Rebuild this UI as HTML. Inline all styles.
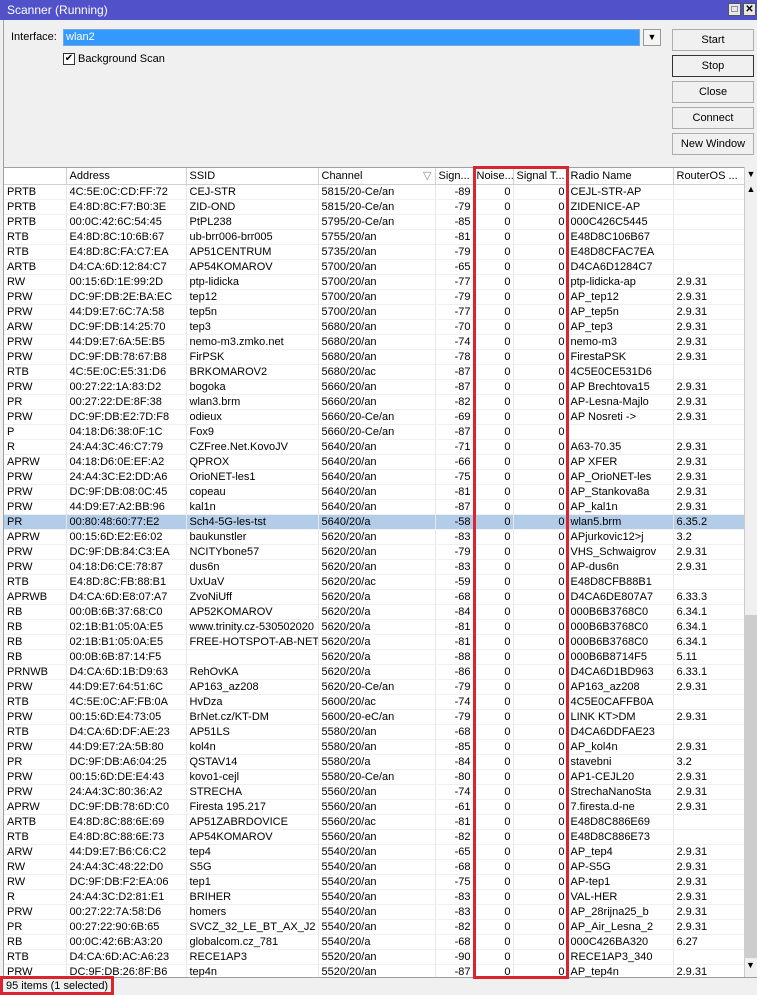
<!DOCTYPE html>
<html><head><meta charset="utf-8"><style>
*{margin:0;padding:0;box-sizing:border-box}
body{width:757px;height:995px;overflow:hidden;background:#f0f0f0;font-family:"Liberation Sans",sans-serif;font-size:11px;color:#000;position:relative}
.title{position:absolute;left:0;top:0;width:757px;height:20px;background:#5151c9;color:#fff;font-size:12px;line-height:20px;padding-left:7px}
.tb{position:absolute;top:3px;width:13px;height:13px;background:#e8e8e8;border:1px solid #555;font-size:10px;line-height:11px;text-align:center;color:#000}
.lbl{position:absolute;left:11px;top:31px;font-size:11px}
.inp{position:absolute;left:63px;top:29px;width:577px;height:17px;background:#3399ff;border:1px solid #7aa7d6;color:#fff;padding-left:2px;line-height:15px}
.dd{position:absolute;left:643px;top:29px;width:18px;height:17px;background:#f5f5f5;border:1px solid #999;font-size:9px;text-align:center;line-height:15px}
.cb{position:absolute;left:63px;top:53px;width:12px;height:12px;border:1px solid #333;background:#fff;font-size:10px;line-height:10px;text-align:center}
.cbl{position:absolute;left:78px;top:53px}
.btn{position:absolute;left:672px;width:82px;height:22px;background:#f0f0f0;border:1px solid #adadad;text-align:center;line-height:20px;font-size:11px}
.leftb{position:absolute;left:3px;top:20px;width:1px;height:957px;background:#a0a0a0}
.grid{position:absolute;left:4px;top:167px;width:740px;height:810px;background:#fff;overflow:hidden;border-top:1px solid #a0a0a0}
table{border-collapse:collapse;table-layout:fixed;width:740px}
td,th{height:15px;line-height:14px;white-space:nowrap;overflow:hidden;border-right:1px solid #e8e8e8;border-bottom:1px solid #f0f0f0;padding:0 3px;font-weight:normal;text-align:left}
th{height:16px;background:#fff;border-right:1px solid #d0d0d0;border-bottom:1px solid #d0d0d0}
td.n{text-align:right;padding-right:2px}
tr.sel td{background:#b3cde9}
.sb{position:absolute;left:744px;top:167px;width:13px;height:810px;background:#f0f0f0;border-left:1px solid #ccc}
.thumb{position:absolute;left:744px;top:615px;width:13px;height:343px;background:#cdcdcd}
.status{position:absolute;left:0;top:977px;width:757px;height:18px;background:#f0f0f0;border-top:1px solid #a0a0a0}
.st{position:absolute;left:6px;top:980px;font-size:11px}
.red{position:absolute;border:3px solid #d92530}
</style></head><body>
<div class="title">Scanner (Running)</div>
<div class="tb" style="left:728px">&#9633;</div>
<div class="tb" style="left:743px;font-weight:bold">✕</div>
<div class="lbl">Interface:</div>
<div class="inp">wlan2</div>
<div class="dd">▼</div>
<div class="cb">✔</div><div class="cbl">Background Scan</div>
<div class="btn" style="top:29px">Start</div>
<div class="btn" style="top:55px;border:1px solid #333">Stop</div>
<div class="btn" style="top:81px">Close</div>
<div class="btn" style="top:107px">Connect</div>
<div class="btn" style="top:133px">New Window</div>
<div class="leftb"></div>
<div class="grid"><table>
<colgroup><col style="width:62px"><col style="width:120px"><col style="width:132px"><col style="width:117px"><col style="width:38px"><col style="width:40px"><col style="width:54px"><col style="width:106px"><col style="width:71px"></colgroup>
<tr><th></th><th>Address</th><th>SSID</th><th>Channel <span style="float:right;color:#888">▽</span></th><th>Sign...</th><th>Noise...</th><th>Signal T...</th><th>Radio Name</th><th>RouterOS ...</th></tr>
<tr><td>PRTB</td><td>4C:5E:0C:CD:FF:72</td><td>CEJ-STR</td><td>5815/20-Ce/an</td><td class="n">-89</td><td class="n">0</td><td class="n">0</td><td>CEJL-STR-AP</td><td></td></tr>
<tr><td>PRTB</td><td>E4:8D:8C:F7:B0:3E</td><td>ZID-OND</td><td>5815/20-Ce/an</td><td class="n">-79</td><td class="n">0</td><td class="n">0</td><td>ZIDENICE-AP</td><td></td></tr>
<tr><td>PRTB</td><td>00:0C:42:6C:54:45</td><td>PtPL238</td><td>5795/20-Ce/an</td><td class="n">-85</td><td class="n">0</td><td class="n">0</td><td>000C426C5445</td><td></td></tr>
<tr><td>RTB</td><td>E4:8D:8C:10:6B:67</td><td>ub-brr006-brr005</td><td>5755/20/an</td><td class="n">-81</td><td class="n">0</td><td class="n">0</td><td>E48D8C106B67</td><td></td></tr>
<tr><td>RTB</td><td>E4:8D:8C:FA:C7:EA</td><td>AP51CENTRUM</td><td>5735/20/an</td><td class="n">-79</td><td class="n">0</td><td class="n">0</td><td>E48D8CFAC7EA</td><td></td></tr>
<tr><td>ARTB</td><td>D4:CA:6D:12:84:C7</td><td>AP54KOMAROV</td><td>5700/20/an</td><td class="n">-65</td><td class="n">0</td><td class="n">0</td><td>D4CA6D1284C7</td><td></td></tr>
<tr><td>RW</td><td>00:15:6D:1E:99:2D</td><td>ptp-lidicka</td><td>5700/20/an</td><td class="n">-77</td><td class="n">0</td><td class="n">0</td><td>ptp-lidicka-ap</td><td>2.9.31</td></tr>
<tr><td>PRW</td><td>DC:9F:DB:2E:BA:EC</td><td>tep12</td><td>5700/20/an</td><td class="n">-79</td><td class="n">0</td><td class="n">0</td><td>AP_tep12</td><td>2.9.31</td></tr>
<tr><td>PRW</td><td>44:D9:E7:6C:7A:58</td><td>tep5n</td><td>5700/20/an</td><td class="n">-77</td><td class="n">0</td><td class="n">0</td><td>AP_tep5n</td><td>2.9.31</td></tr>
<tr><td>ARW</td><td>DC:9F:DB:14:25:70</td><td>tep3</td><td>5680/20/an</td><td class="n">-70</td><td class="n">0</td><td class="n">0</td><td>AP_tep3</td><td>2.9.31</td></tr>
<tr><td>PRW</td><td>44:D9:E7:6A:5E:B5</td><td>nemo-m3.zmko.net</td><td>5680/20/an</td><td class="n">-74</td><td class="n">0</td><td class="n">0</td><td>nemo-m3</td><td>2.9.31</td></tr>
<tr><td>PRW</td><td>DC:9F:DB:78:67:B8</td><td>FirPSK</td><td>5680/20/an</td><td class="n">-78</td><td class="n">0</td><td class="n">0</td><td>FirestaPSK</td><td>2.9.31</td></tr>
<tr><td>RTB</td><td>4C:5E:0C:E5:31:D6</td><td>BRKOMAROV2</td><td>5680/20/ac</td><td class="n">-87</td><td class="n">0</td><td class="n">0</td><td>4C5E0CE531D6</td><td></td></tr>
<tr><td>PRW</td><td>00:27:22:1A:83:D2</td><td>bogoka</td><td>5660/20/an</td><td class="n">-87</td><td class="n">0</td><td class="n">0</td><td>AP Brechtova15</td><td>2.9.31</td></tr>
<tr><td>PR</td><td>00:27:22:DE:8F:38</td><td>wlan3.brm</td><td>5660/20/an</td><td class="n">-82</td><td class="n">0</td><td class="n">0</td><td>AP-Lesna-Majlo</td><td>2.9.31</td></tr>
<tr><td>PRW</td><td>DC:9F:DB:E2:7D:F8</td><td>odieux</td><td>5660/20-Ce/an</td><td class="n">-69</td><td class="n">0</td><td class="n">0</td><td>AP Nosreti -&gt;</td><td>2.9.31</td></tr>
<tr><td>P</td><td>04:18:D6:38:0F:1C</td><td>Fox9</td><td>5660/20-Ce/an</td><td class="n">-87</td><td class="n">0</td><td class="n">0</td><td></td><td></td></tr>
<tr><td>R</td><td>24:A4:3C:46:C7:79</td><td>CZFree.Net.KovoJV</td><td>5640/20/an</td><td class="n">-71</td><td class="n">0</td><td class="n">0</td><td>A63-70.35</td><td>2.9.31</td></tr>
<tr><td>APRW</td><td>04:18:D6:0E:EF:A2</td><td>QPROX</td><td>5640/20/an</td><td class="n">-66</td><td class="n">0</td><td class="n">0</td><td>AP XFER</td><td>2.9.31</td></tr>
<tr><td>PRW</td><td>24:A4:3C:E2:DD:A6</td><td>OrioNET-les1</td><td>5640/20/an</td><td class="n">-75</td><td class="n">0</td><td class="n">0</td><td>AP_OrioNET-les</td><td>2.9.31</td></tr>
<tr><td>PRW</td><td>DC:9F:DB:08:0C:45</td><td>copeau</td><td>5640/20/an</td><td class="n">-81</td><td class="n">0</td><td class="n">0</td><td>AP_Stankova8a</td><td>2.9.31</td></tr>
<tr><td>PRW</td><td>44:D9:E7:A2:BB:96</td><td>kal1n</td><td>5640/20/an</td><td class="n">-87</td><td class="n">0</td><td class="n">0</td><td>AP_kal1n</td><td>2.9.31</td></tr>
<tr class="sel"><td>PR</td><td>00:80:48:60:77:E2</td><td>Sch4-5G-les-tst</td><td>5640/20/a</td><td class="n">-58</td><td class="n">0</td><td class="n">0</td><td>wlan5.brm</td><td>6.35.2</td></tr>
<tr><td>APRW</td><td>00:15:6D:E2:E6:02</td><td>baukunstler</td><td>5620/20/an</td><td class="n">-83</td><td class="n">0</td><td class="n">0</td><td>APjurkovic12&gt;j</td><td>3.2</td></tr>
<tr><td>PRW</td><td>DC:9F:DB:84:C3:EA</td><td>NCITYbone57</td><td>5620/20/an</td><td class="n">-79</td><td class="n">0</td><td class="n">0</td><td>VHS_Schwaigrov</td><td>2.9.31</td></tr>
<tr><td>PRW</td><td>04:18:D6:CE:78:87</td><td>dus6n</td><td>5620/20/an</td><td class="n">-83</td><td class="n">0</td><td class="n">0</td><td>AP-dus6n</td><td>2.9.31</td></tr>
<tr><td>RTB</td><td>E4:8D:8C:FB:88:B1</td><td>UxUaV</td><td>5620/20/ac</td><td class="n">-59</td><td class="n">0</td><td class="n">0</td><td>E48D8CFB88B1</td><td></td></tr>
<tr><td>APRWB</td><td>D4:CA:6D:E8:07:A7</td><td>ZvoNiUff</td><td>5620/20/a</td><td class="n">-68</td><td class="n">0</td><td class="n">0</td><td>D4CA6DE807A7</td><td>6.33.3</td></tr>
<tr><td>RB</td><td>00:0B:6B:37:68:C0</td><td>AP52KOMAROV</td><td>5620/20/a</td><td class="n">-84</td><td class="n">0</td><td class="n">0</td><td>000B6B3768C0</td><td>6.34.1</td></tr>
<tr><td>RB</td><td>02:1B:B1:05:0A:E5</td><td>www.trinity.cz-530502020</td><td>5620/20/a</td><td class="n">-81</td><td class="n">0</td><td class="n">0</td><td>000B6B3768C0</td><td>6.34.1</td></tr>
<tr><td>RB</td><td>02:1B:B1:05:0A:E5</td><td>FREE-HOTSPOT-AB-NET</td><td>5620/20/a</td><td class="n">-81</td><td class="n">0</td><td class="n">0</td><td>000B6B3768C0</td><td>6.34.1</td></tr>
<tr><td>RB</td><td>00:0B:6B:87:14:F5</td><td></td><td>5620/20/a</td><td class="n">-88</td><td class="n">0</td><td class="n">0</td><td>000B6B8714F5</td><td>5.11</td></tr>
<tr><td>PRNWB</td><td>D4:CA:6D:1B:D9:63</td><td>RehOvKA</td><td>5620/20/a</td><td class="n">-86</td><td class="n">0</td><td class="n">0</td><td>D4CA6D1BD963</td><td>6.33.1</td></tr>
<tr><td>PRW</td><td>44:D9:E7:64:51:6C</td><td>AP163_az208</td><td>5620/20-Ce/an</td><td class="n">-79</td><td class="n">0</td><td class="n">0</td><td>AP163_az208</td><td>2.9.31</td></tr>
<tr><td>RTB</td><td>4C:5E:0C:AF:FB:0A</td><td>HvDza</td><td>5600/20/ac</td><td class="n">-74</td><td class="n">0</td><td class="n">0</td><td>4C5E0CAFFB0A</td><td></td></tr>
<tr><td>PRW</td><td>00:15:6D:E4:73:05</td><td>BrNet.cz/KT-DM</td><td>5600/20-eC/an</td><td class="n">-79</td><td class="n">0</td><td class="n">0</td><td>LINK KT&gt;DM</td><td>2.9.31</td></tr>
<tr><td>RTB</td><td>D4:CA:6D:DF:AE:23</td><td>AP51LS</td><td>5580/20/an</td><td class="n">-68</td><td class="n">0</td><td class="n">0</td><td>D4CA6DDFAE23</td><td></td></tr>
<tr><td>PRW</td><td>44:D9:E7:2A:5B:80</td><td>kol4n</td><td>5580/20/an</td><td class="n">-85</td><td class="n">0</td><td class="n">0</td><td>AP_kol4n</td><td>2.9.31</td></tr>
<tr><td>PR</td><td>DC:9F:DB:A6:04:25</td><td>QSTAV14</td><td>5580/20/a</td><td class="n">-84</td><td class="n">0</td><td class="n">0</td><td>stavebni</td><td>3.2</td></tr>
<tr><td>PRW</td><td>00:15:6D:DE:E4:43</td><td>kovo1-cejl</td><td>5580/20-Ce/an</td><td class="n">-80</td><td class="n">0</td><td class="n">0</td><td>AP1-CEJL20</td><td>2.9.31</td></tr>
<tr><td>PRW</td><td>24:A4:3C:80:36:A2</td><td>STRECHA</td><td>5560/20/an</td><td class="n">-74</td><td class="n">0</td><td class="n">0</td><td>StrechaNanoSta</td><td>2.9.31</td></tr>
<tr><td>APRW</td><td>DC:9F:DB:78:6D:C0</td><td>Firesta 195.217</td><td>5560/20/an</td><td class="n">-61</td><td class="n">0</td><td class="n">0</td><td>7.firesta.d-ne</td><td>2.9.31</td></tr>
<tr><td>ARTB</td><td>E4:8D:8C:88:6E:69</td><td>AP51ZABRDOVICE</td><td>5560/20/ac</td><td class="n">-81</td><td class="n">0</td><td class="n">0</td><td>E48D8C886E69</td><td></td></tr>
<tr><td>RTB</td><td>E4:8D:8C:88:6E:73</td><td>AP54KOMAROV</td><td>5560/20/an</td><td class="n">-82</td><td class="n">0</td><td class="n">0</td><td>E48D8C886E73</td><td></td></tr>
<tr><td>ARW</td><td>44:D9:E7:B6:C6:C2</td><td>tep4</td><td>5540/20/an</td><td class="n">-65</td><td class="n">0</td><td class="n">0</td><td>AP_tep4</td><td>2.9.31</td></tr>
<tr><td>RW</td><td>24:A4:3C:48:22:D0</td><td>S5G</td><td>5540/20/an</td><td class="n">-68</td><td class="n">0</td><td class="n">0</td><td>AP-S5G</td><td>2.9.31</td></tr>
<tr><td>RW</td><td>DC:9F:DB:F2:EA:06</td><td>tep1</td><td>5540/20/an</td><td class="n">-75</td><td class="n">0</td><td class="n">0</td><td>AP-tep1</td><td>2.9.31</td></tr>
<tr><td>R</td><td>24:A4:3C:D2:81:E1</td><td>BRIHER</td><td>5540/20/an</td><td class="n">-83</td><td class="n">0</td><td class="n">0</td><td>VAL-HER</td><td>2.9.31</td></tr>
<tr><td>PRW</td><td>00:27:22:7A:58:D6</td><td>homers</td><td>5540/20/an</td><td class="n">-83</td><td class="n">0</td><td class="n">0</td><td>AP_28rijna25_b</td><td>2.9.31</td></tr>
<tr><td>PR</td><td>00:27:22:90:6B:65</td><td>SVCZ_32_LE_BT_AX_J2</td><td>5540/20/an</td><td class="n">-82</td><td class="n">0</td><td class="n">0</td><td>AP_Air_Lesna_2</td><td>2.9.31</td></tr>
<tr><td>RB</td><td>00:0C:42:6B:A3:20</td><td>globalcom.cz_781</td><td>5540/20/a</td><td class="n">-68</td><td class="n">0</td><td class="n">0</td><td>000C426BA320</td><td>6.27</td></tr>
<tr><td>RTB</td><td>D4:CA:6D:AC:A6:23</td><td>RECE1AP3</td><td>5520/20/an</td><td class="n">-90</td><td class="n">0</td><td class="n">0</td><td>RECE1AP3_340</td><td></td></tr>
<tr><td>PRW</td><td>DC:9F:DB:26:8F:B6</td><td>tep4n</td><td>5520/20/an</td><td class="n">-87</td><td class="n">0</td><td class="n">0</td><td>AP_tep4n</td><td>2.9.31</td></tr>
</table></div>
<div class="sb"><div style="text-align:center;font-size:9px;line-height:15px">▼</div><div style="text-align:center;font-size:9px;line-height:14px">▲</div></div>
<div class="thumb"></div>
<div style="position:absolute;left:744px;top:958px;width:13px;height:15px;text-align:center;font-size:9px;line-height:15px">▼</div>
<div class="status"></div>
<div class="st">95 items (1 selected)</div>
<div class="red" style="left:473px;top:166px;width:96px;height:813px"></div>
<div class="red" style="left:0;top:976px;width:114px;height:19px"></div>
</body></html>
